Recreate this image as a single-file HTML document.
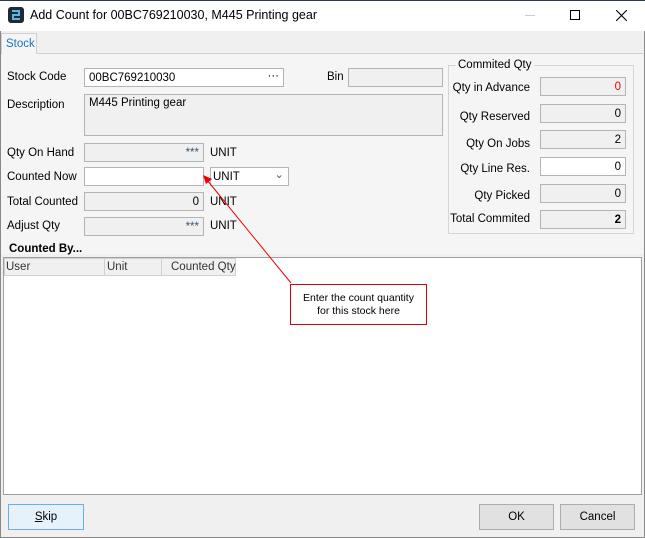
<!DOCTYPE html>
<html><head><style>
*{box-sizing:border-box;margin:0;padding:0}
body{width:645px;height:538px;overflow:hidden;background:#f0f0f0;font-family:"Liberation Sans",sans-serif;font-size:11.5px;color:#000;position:relative}
.a{position:absolute}
.in{position:absolute;border:1px solid #b4b4b4;background:#f0f0f0;height:19px;text-align:right;padding:3px 4px 0;line-height:13px;font-size:11.5px}
.w{background:#fff}
.l{position:absolute;font-size:11.5px}
.r{text-align:right}
.btn{position:absolute;height:26px;border:1px solid #adadad;background:#e1e1e1;text-align:center;line-height:24px}
</style></head><body>
<div class="a" style="left:0;top:0;width:645px;height:31px;background:#fff;border-top:1px solid #2b3a4a"></div>
<svg class="a" style="left:8px;top:7px" width="16" height="16"><rect x="0" y="0" width="16" height="16" rx="3" fill="#1e2a36"/><path d="M4 4h7v4H5v4h7" stroke="#5ab4e6" stroke-width="2" fill="none"/></svg>
<div class="l" style="left:30px;top:8px;font-size:12.5px">Add Count for 00BC769210030, M445 Printing gear</div>
<div class="a" style="left:525px;top:15px;width:10px;height:1px;background:#ccc"></div>
<div class="a" style="left:570px;top:10px;width:10px;height:10px;border:1px solid #000"></div>
<svg class="a" style="left:616px;top:10px" width="11" height="11"><path d="M0 0L11 11M11 0L0 11" stroke="#000" stroke-width="1.1"/></svg>
<div class="a" style="left:0;top:31px;width:645px;height:507px;border-left:1px solid #888;border-right:1px solid #888;border-bottom:1px solid #888"></div>
<div class="a" style="left:36px;top:53px;width:607px;height:1px;background:#d0d0d0"></div>
<div class="a" style="left:1px;top:33px;width:36px;height:21px;border:1px solid #d0d0d0;border-bottom:none;background:#f5f5f5"></div>
<div class="l" style="left:6px;top:38px;color:#1874c8">Stock</div>
<div class="a" style="left:1px;top:54px;width:642px;height:200px;background:#f5f5f5"></div>

<div class="l" style="left:7px;top:71px">Stock Code</div>
<div class="in w" style="left:84px;top:68px;width:200px;text-align:left">00BC769210030<span style="position:absolute;right:4px;top:1px">···</span></div>
<div class="l" style="left:327px;top:71px">Bin</div>
<div class="in" style="left:348px;top:68px;width:95px"></div>
<div class="l" style="left:7px;top:99px">Description</div>
<div class="in" style="left:84px;top:94px;width:359px;height:42px;text-align:left;padding-top:2px">M445 Printing gear</div>

<div class="l" style="left:7px;top:147px">Qty On Hand</div>
<div class="in" style="left:84px;top:143px;width:120px;color:#357">***</div>
<div class="l" style="left:210px;top:147px">UNIT</div>
<div class="l" style="left:7px;top:171px">Counted Now</div>
<div class="in w" style="left:84px;top:167px;width:120px"></div>
<div class="in w" style="left:210px;top:167px;width:79px;text-align:left;padding-left:2px">UNIT<span style="position:absolute;right:4px;top:1px;color:#666">⌄</span></div>
<div class="l" style="left:7px;top:196px">Total Counted</div>
<div class="in" style="left:84px;top:192px;width:120px">0</div>
<div class="l" style="left:210px;top:196px">UNIT</div>
<div class="l" style="left:7px;top:220px">Adjust Qty</div>
<div class="in" style="left:84px;top:217px;width:120px;color:#357">***</div>
<div class="l" style="left:210px;top:220px">UNIT</div>

<div class="a" style="left:448px;top:65px;width:186px;height:169px;border:1px solid #d5d5d5"></div>
<div class="l" style="left:456px;top:59px;background:#f5f5f5;padding:0 2px">Commited Qty</div>
<div class="l r" style="left:440px;top:82px;width:90px">Qty in Advance</div>
<div class="in" style="left:540px;top:77px;width:86px;color:#e00">0</div>
<div class="l r" style="left:440px;top:111px;width:90px">Qty Reserved</div>
<div class="in" style="left:540px;top:104px;width:86px">0</div>
<div class="l r" style="left:440px;top:138px;width:90px">Qty On Jobs</div>
<div class="in" style="left:540px;top:130px;width:86px">2</div>
<div class="l r" style="left:440px;top:163px;width:90px">Qty Line Res.</div>
<div class="in w" style="left:540px;top:157px;width:86px">0</div>
<div class="l r" style="left:440px;top:190px;width:90px">Qty Picked</div>
<div class="in" style="left:540px;top:184px;width:86px">0</div>
<div class="l r" style="left:440px;top:213px;width:90px">Total Commited</div>
<div class="in" style="left:540px;top:210px;width:86px;font-weight:bold">2</div>

<div class="l" style="left:9px;top:243px;font-weight:bold">Counted By...</div>
<div class="a" style="left:3px;top:257px;width:639px;height:238px;background:#fff;border:1px solid #a0a0a0"></div>
<div class="a" style="left:4px;top:258px;width:232px;height:18px;background:#f0f0f0;border:1px solid #d0d0d0"></div>
<div class="a" style="left:104px;top:258px;width:1px;height:18px;background:#d0d0d0"></div>
<div class="a" style="left:161px;top:258px;width:1px;height:18px;background:#d0d0d0"></div>
<div class="l" style="left:6px;top:261px;color:#333">User</div>
<div class="l" style="left:107px;top:261px;color:#333">Unit</div>
<div class="l" style="left:171px;top:261px;color:#333">Counted Qty</div>

<svg class="a" style="left:0;top:0" width="645" height="538"><line x1="291" y1="283" x2="207" y2="180" stroke="#e00" stroke-width="1"/><polygon points="203,175 212,179 206,184" fill="#e00"/></svg>
<div class="a" style="left:290px;top:284px;width:137px;height:41px;border:1px solid #d00;background:#fff;text-align:center;font-size:10.5px;padding-top:7px;line-height:13px">Enter the count quantity<br>for this stock here</div>

<div class="btn" style="left:8px;top:504px;width:76px;background:#e5f1fb;border-color:#6eaee6"><u>S</u>kip</div>
<div class="btn" style="left:479px;top:504px;width:75px">OK</div>
<div class="btn" style="left:560px;top:504px;width:75px">Cancel</div>
</body></html>
